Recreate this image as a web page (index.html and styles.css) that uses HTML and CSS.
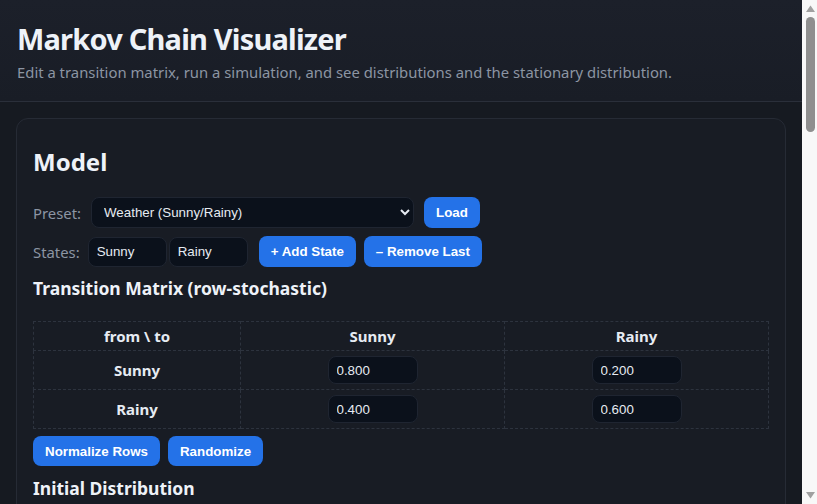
FILE: index.html
```html
<!DOCTYPE html>
<html lang="en">
<head>
<meta charset="utf-8">
<title>Markov Chain Visualizer</title>
<link rel="stylesheet" href="styles.css">
</head>
<body>
<div class="page">
<header class="app-header">
  <h1 class="app-title">Markov Chain Visualizer</h1>
  <p class="subtitle">Edit a transition matrix, run a simulation, and see distributions and the stationary distribution.</p>
</header>
<main class="main">
  <section class="card">
    <h2 class="card-title">Model</h2>
    <div class="row">
      <label class="lbl" for="preset">Preset:</label>
      <select id="preset" class="select"><option>Weather (Sunny/Rainy)</option><option>Random Walk</option></select>
      <button class="btn">Load</button>
    </div>
    <div class="row row-states">
      <span class="lbl">States:</span>
      <span class="state-list"><input class="field state" value="Sunny"><input class="field state" value="Rainy"></span>
      <button class="btn">+ Add State</button>
      <button class="btn">– Remove Last</button>
    </div>
    <h3 class="section-title">Transition Matrix (row-stochastic)</h3>
    <table class="matrix">
      <thead>
        <tr><th class="corner">from \ to</th><th>Sunny</th><th>Rainy</th></tr>
      </thead>
      <tbody>
        <tr><th>Sunny</th><td><input class="field num" value="0.800"></td><td><input class="field num" value="0.200"></td></tr>
        <tr><th>Rainy</th><td><input class="field num" value="0.400"></td><td><input class="field num" value="0.600"></td></tr>
      </tbody>
    </table>
    <div class="row row-tight">
      <button class="btn">Normalize Rows</button>
      <button class="btn">Randomize</button>
    </div>
    <h3 class="section-title">Initial Distribution</h3>
    <div class="row">
      <span class="lbl">Sunny</span><input class="field num" value="1.000">
      <span class="lbl">Rainy</span><input class="field num" value="0.000">
      <button class="btn">Normalize</button>
    </div>
  </section>

  <section class="card">
    <h2 class="card-title">Simulation</h2>
    <div class="row">
      <span class="lbl">Steps:</span><input class="field num" value="50">
      <span class="lbl">Start state:</span><input class="field state" value="Sunny">
      <button class="btn">Run</button>
      <button class="btn">Step</button>
      <button class="btn">Reset</button>
    </div>
  </section>
</main>
</div>
<aside class="scrollbar" aria-hidden="true">
  <div class="sb-btn">
    <svg width="9" height="7" viewBox="0 0 9 7"><polygon points="4.5,0.5 9,7 0,7" fill="#a0a0a0"/></svg>
  </div>
  <div class="sb-track"><div class="sb-thumb"></div></div>
  <div class="sb-btn">
    <svg width="9" height="7" viewBox="0 0 9 7"><polygon points="0,0 9,0 4.5,6.5" fill="#a0a0a0"/></svg>
  </div>
</aside>
</body>
</html>
```

FILE: styles.css
```css
html, body {
  margin: 0;
  padding: 0;
}
body {
  display: flex;
  height: 100vh;
  overflow: hidden;
  background: #161a21;
  color: #e6ebf2;
  font-family: "Noto Sans", "Open Sans", sans-serif;
}
.page {
  flex: 1;
  min-width: 0;
  overflow: hidden;
}
.scrollbar {
  flex: 0 0 15px;
  display: flex;
  flex-direction: column;
  align-items: center;
  background: #f8f8f8;
}
.sb-btn {
  height: 17px;
  width: 100%;
  display: flex;
  align-items: center;
  justify-content: center;
}
.sb-btn svg {
  display: block;
  margin-left: 1px;
}
.sb-track {
  flex: 1;
  width: 100%;
  display: flex;
  justify-content: center;
}
.sb-thumb {
  width: 9px;
  height: 115px;
  margin-left: 1px;
  border-radius: 5px;
  background: #8f8f8f;
}
.app-header {
  padding: 20px 17px 18px;
  background: linear-gradient(180deg, #1c202a 0%, #191d26 100%);
  border-bottom: 1px solid #2a2f3a;
}
.app-title {
  margin: 0;
  font-size: 29px;
  line-height: 38px;
  font-weight: 700;
  letter-spacing: -0.8px;
  color: #eef2f8;
}
.subtitle {
  margin: 3px 0 0;
  font-size: 14.85px;
  line-height: 22px;
  color: #8c95a3;
}
.main {
  padding: 16px 16px 40px;
  display: flex;
  flex-direction: column;
  gap: 16px;
}
.card {
  background: #181c24;
  border: 1px solid #262b35;
  border-radius: 12px;
  padding: 16px;
}
.card-title {
  margin: 11px 0 19px;
  font-size: 24px;
  line-height: 32px;
  font-weight: 700;
  color: #eef2f8;
}
.row {
  display: flex;
  align-items: center;
  gap: 10px;
  margin-bottom: 8px;
}
.row-states {
  gap: 8px;
}
.row-states .state-list {
  margin-right: 3px;
}
.row-tight {
  gap: 8px;
  margin-top: 7px;
  margin-bottom: 10px;
}
.lbl {
  font-size: 14.85px;
  color: #8c95a3;
}
.state-list {
  display: flex;
  gap: 2px;
}
.select {
  color-scheme: dark;
  width: 323px;
  height: 31px;
  padding: 0 8px;
  background-color: #0b111b;
  color: #e6ebf2;
  border: 1px solid #1f2531;
  border-radius: 8px;
  font-family: "Liberation Sans", Arial, sans-serif;
  font-size: 13.33px;
}
.field {
  box-sizing: border-box;
  height: 30px;
  padding: 0 8px;
  background: #0b111b;
  color: #e6ebf2;
  border: 1px solid #1f2531;
  border-radius: 8px;
  font-family: "Liberation Sans", Arial, sans-serif;
  font-size: 13.33px;
}
.state {
  width: 79px;
}
.num {
  width: 90px;
  height: 28px;
}
.btn {
  height: 31px;
  padding: 0 12px;
  background: #2472e8;
  color: #ffffff;
  border: none;
  border-radius: 8px;
  font-family: "Liberation Sans", Arial, sans-serif;
  font-size: 13.33px;
  font-weight: 700;
}
.row-tight .btn {
  height: 30px;
}
.section-title {
  margin: 9px 0 21px;
  font-size: 17.5px;
  line-height: 24px;
  font-weight: 700;
  color: #eef2f8;
}
.matrix {
  width: 100%;
  border-collapse: collapse;
}
.matrix th, .matrix td {
  border: 1px dashed #2d333e;
  text-align: center;
  padding: 4px 8px;
  height: 30px;
}
.matrix thead th {
  height: 20px;
  font-size: 15px;
  font-weight: 700;
}
.matrix .corner {
  width: 190px;
}
.matrix tbody th {
  font-size: 15px;
  font-weight: 700;
}
```
